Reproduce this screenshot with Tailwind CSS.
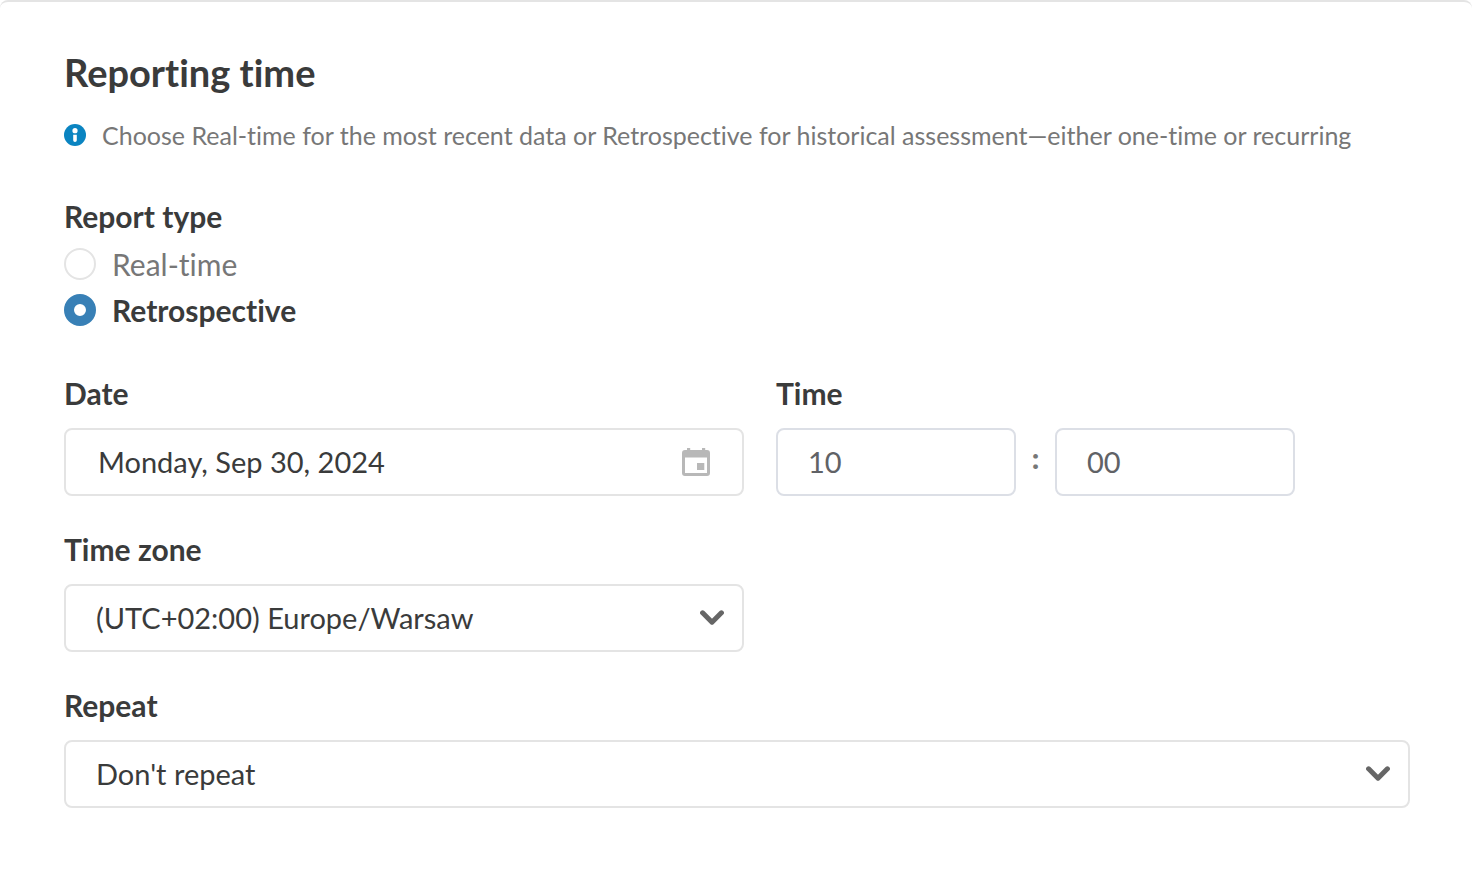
<!DOCTYPE html>
<html lang="en">
<head>
    <meta charset="UTF-8" />
    <meta name="viewport" content="width=device-width, initial-scale=1" />
    <title>Reporting time</title>
    <script src="https://cdn.jsdelivr.net/npm/@tailwindcss/browser@4"></script>
</head>
<body class="bg-white font-['Lato',sans-serif] text-[29px] leading-9 text-[#3a3b3b] [font-variant-ligatures:none]">
<form class="min-h-screen rounded-lg border-t-2 border-[#e4e4e4] pt-[46px] pb-16 pl-16 pr-[62px]">
    <h2 class="text-[38px] leading-12 font-bold">Reporting time</h2>
    <p class="mt-[21px] flex items-center gap-4 text-[25px] leading-9 text-[#777777]">
        <svg class="size-[22px] shrink-0" viewBox="0 0 22 22" aria-hidden="true">
            <circle cx="11" cy="11" r="11" fill="#0a84c1" />
            <circle cx="11" cy="6.7" r="2.6" fill="#fff" />
            <path d="M9.2 10.8h3.6v5.4a1.8 1.8 0 0 1-3.6 0z" fill="#fff" />
        </svg>
        Choose Real-time for the most recent data or Retrospective for historical assessment—either one-time or recurring
    </p>

    <!-- Report type -->
    <fieldset class="mt-[45px] text-[30px] leading-9">
        <legend class="mb-[14px] font-bold">Report type</legend>
        <div class="flex flex-col gap-[14px]">
            <label class="flex h-8 items-center gap-4 pb-px text-[#777777] has-checked:font-bold has-checked:text-[#3a3b3b]">
                <input type="radio" name="report_type" value="realtime"
                       class="size-8 appearance-none rounded-full border-2 border-[#e4e4e4] bg-white checked:border-10 checked:border-[#3880b6]" />
                Real-time
            </label>
            <label class="flex h-8 items-center gap-4 pb-px text-[#777777] has-checked:font-bold has-checked:text-[#3a3b3b]">
                <input type="radio" name="report_type" value="retrospective" checked
                       class="size-8 appearance-none rounded-full border-2 border-[#e4e4e4] bg-white checked:border-10 checked:border-[#3880b6]" />
                Retrospective
            </label>
        </div>
    </fieldset>

    <!-- Date and time -->
    <div class="mt-[49px] flex flex-wrap gap-8">
        <div class="w-[680px] max-w-full">
            <label for="date" class="block text-[30px] leading-9 font-bold">Date</label>
            <div class="relative mt-[17px]">
                <input type="text" id="date" name="date" value="Monday, Sep 30, 2024"
                       class="block h-17 w-full rounded-lg border-2 border-[#e4e4e4] pb-0.5 pl-8 pr-20" />
                <svg class="pointer-events-none absolute right-8 top-[18px] size-8" viewBox="-2 -2 32 32" aria-hidden="true">
                    <path fill="#b8b8b8" fill-rule="evenodd" d="M5 0h3.2v2H20V0h3.2v2H25a3 3 0 0 1 3 3v20a3 3 0 0 1-3 3H3a3 3 0 0 1-3-3V5a3 3 0 0 1 3-3h2zM3 9.6V25h22V9.6zM15 15h7.3v7H15z" />
                </svg>
            </div>
        </div>
        <div>
            <label for="hour" class="block text-[30px] leading-9 font-bold">Time</label>
            <div class="mt-[17px] flex items-center text-[#606266]">
                <input type="text" id="hour" name="hour" value="10"
                       class="h-17 w-60 rounded-lg border-2 border-[#dcdfe6] px-[30px] pb-0.5" />
                <span class="w-[39px] pb-2 text-center font-black text-[#777777]">:</span>
                <input type="text" id="minute" name="minute" value="00" aria-label="Minutes"
                       class="h-17 w-60 rounded-lg border-2 border-[#dcdfe6] px-[30px] pb-0.5" />
            </div>
        </div>
    </div>

    <!-- Time zone -->
    <div class="mt-[35px] w-[680px] max-w-full">
        <label for="timezone" class="block text-[30px] leading-9 font-bold">Time zone</label>
        <div class="relative mt-[17px]">
            <select id="timezone" name="timezone"
                    class="block h-17 w-full appearance-none rounded-lg border-2 border-[#e4e4e4] bg-white pl-[30px] pr-20">
                <option>(UTC+02:00) Europe/Warsaw</option>
            </select>
            <svg class="pointer-events-none absolute right-5 top-[26px] h-4 w-6" viewBox="0 0 24 16" fill="none" aria-hidden="true">
                <path d="M2.6 2.8 12 12.2l9.4-9.4" stroke="#666" stroke-width="5" stroke-linecap="round" stroke-linejoin="round" />
            </svg>
        </div>
    </div>

    <!-- Repeat -->
    <div class="mt-[35px]">
        <label for="repeat" class="block text-[30px] leading-9 font-bold">Repeat</label>
        <div class="relative mt-[17px]">
            <select id="repeat" name="repeat"
                    class="block h-17 w-full appearance-none rounded-lg border-2 border-[#e4e4e4] bg-white pl-[30px] pr-20">
                <option>Don't repeat</option>
            </select>
            <svg class="pointer-events-none absolute right-5 top-[26px] h-4 w-6" viewBox="0 0 24 16" fill="none" aria-hidden="true">
                <path d="M2.6 2.8 12 12.2l9.4-9.4" stroke="#666" stroke-width="5" stroke-linecap="round" stroke-linejoin="round" />
            </svg>
        </div>
    </div>
</form>
</body>
</html>
